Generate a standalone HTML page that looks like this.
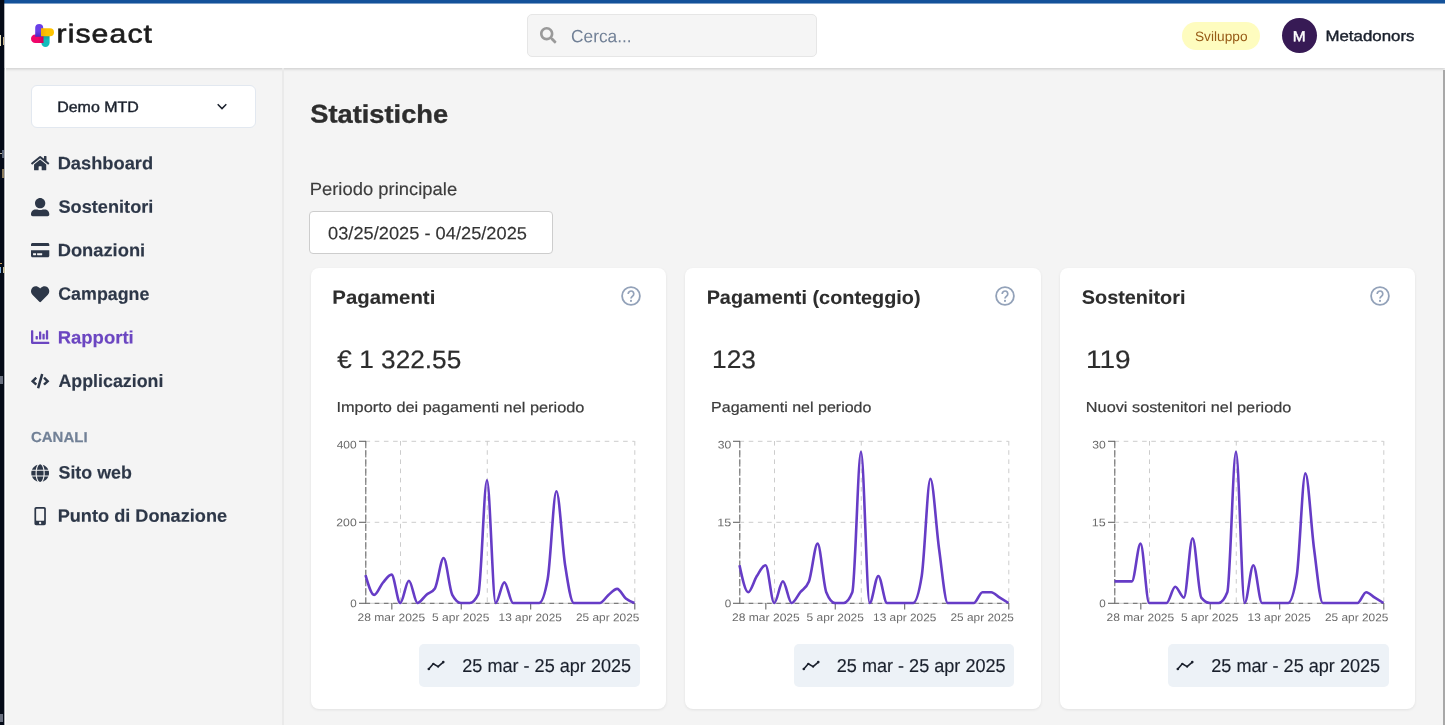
<!DOCTYPE html>
<html lang="it"><head><meta charset="utf-8"><title>Statistiche - riseact</title>
<style>
html,body{margin:0;padding:0;width:1445px;height:725px;overflow:hidden;background:#f4f4f4;font-family:"Liberation Sans", "DejaVu Sans", sans-serif;}
.abs,.ic,.t{position:absolute;}
#txt{position:absolute;left:0;top:0;width:1445px;height:725px;will-change:transform;}
.t{white-space:nowrap;line-height:1;transform-origin:0 0;}
.ic{display:block;overflow:visible;}
</style></head><body>
<div class="abs" style="left:0;top:0;width:1445px;height:725px;background:#f4f4f4"></div>
<div class="abs" style="left:0;top:0;width:1445px;height:68px;background:#fff;box-shadow:0 1px 3px rgba(0,0,0,.18)"></div>
<div class="abs" style="left:282px;top:68px;width:2px;height:657px;background:#eaeaea"></div>
<div class="abs" style="left:0;top:0;width:1445px;height:3px;background:#14529a"></div>
<div class="abs" style="left:0;top:3px;width:1445px;height:1px;background:rgba(20,82,154,.55)"></div>
<div class="abs" style="left:0;top:0;width:4px;height:725px;background:#050b18"></div>
<div class="abs" style="left:4px;top:0;width:1px;height:725px;background:rgba(5,11,24,.3)"></div>
<div class="abs" style="left:5px;top:4px;width:1px;height:721px;background:#fff"></div>
<div class="abs" style="left:0px;top:35.3px;width:1.2px;height:10.3px;background:#e8e2c0"></div>
<div class="abs" style="left:2.6px;top:36.5px;width:1.6px;height:8.5px;background:#c9b48a"></div>
<div class="abs" style="left:0px;top:153px;width:3.2px;height:1.2px;background:#b9b4a0"></div>
<div class="abs" style="left:2px;top:150px;width:1.8px;height:8px;background:#5a6478"></div>
<div class="abs" style="left:2px;top:168.5px;width:1.6px;height:9.5px;background:#8a7a5c"></div>
<div class="abs" style="left:0px;top:262.5px;width:1.5px;height:1.2px;background:#c9a060"></div>
<div class="abs" style="left:0px;top:267px;width:1.4px;height:6px;background:#7fb0e0"></div>
<div class="abs" style="left:3px;top:267px;width:1.6px;height:5.5px;background:#c9c0a0"></div>
<div class="abs" style="left:0px;top:376px;width:2.5px;height:8px;background:#6a7080"></div>
<div class="abs" style="left:0px;top:714px;width:3px;height:8px;background:#6a7080"></div>
<div class="abs" style="left:1443px;top:70px;width:2px;height:655px;background:#a8a8a8"></div>
<svg class="ic" style="left:29px;top:22px;width:27px;height:27px" viewBox="29 22 27 27">
<defs>
<linearGradient id="gp" x1="0" y1="0" x2="0" y2="1"><stop offset=".55" stop-color="#6a40e8"/><stop offset="1" stop-color="#4a2bc2"/></linearGradient>
<linearGradient id="gy" x1="0" y1="0" x2="1" y2="0"><stop offset="0" stop-color="#f5aa00"/><stop offset=".45" stop-color="#fdc300"/></linearGradient>
<linearGradient id="gt" x1="0" y1="0" x2="0" y2="1"><stop offset="0" stop-color="#0d9a9a"/><stop offset=".45" stop-color="#13bcbc"/></linearGradient>
<linearGradient id="gk" x1="0" y1="0" x2="1" y2="0"><stop offset=".55" stop-color="#f0056a"/><stop offset="1" stop-color="#d10055"/></linearGradient>
</defs>
<path d="M41.3 35h8.3v7.85a4.15 4.15 0 0 1-8.3 0z" fill="url(#gt)"/>
<path d="M43.5 34.6v8.5h-8.25a4.25 4.25 0 0 1 0-8.5z" fill="url(#gk)"/>
<path d="M35.2 36.8v-8.7a4 4 0 0 1 8 0v8.700z" fill="url(#gp)"/>
<path d="M41 28.2h9a4 4 0 0 1 0 8h-9z" fill="url(#gy)"/>
</svg>
<div class="abs" style="left:527px;top:14px;width:290px;height:43px;background:#f5f5f5;border:1px solid #e6e6e6;border-radius:5px;box-sizing:border-box"></div>
<svg class="ic" style="left:540.40px;top:27.25px;width:16.5px;height:16.5px" viewBox="0 0 512 512"><path fill="#9a9a9a" d="M505 442.700L405.300 343c-4.500-4.500-10.600-7-17-7H372c27.600-35.300 44-79.700 44-128C416 93.100 322.900 0 208 0S0 93.100 0 208s93.100 208 208 208c48.300 0 92.700-16.400 128-44v16.300c0 6.400 2.500 12.500 7 17l99.700 99.700c9.400 9.400 24.600 9.400 33.900 0l28.300-28.300c9.400-9.400 9.400-24.600.1-34zM208 336c-70.700 0-128-57.200-128-128 0-70.700 57.200-128 128-128 70.700 0 128 57.200 128 128 0 70.700-57.200 128-128 128z"/></svg>
<div class="abs" style="left:1181.9px;top:21.6px;width:77.9px;height:28.3px;background:#fefcbf;border-radius:15px"></div>
<div class="abs" style="left:1282.1px;top:18.4px;width:34.8px;height:34.8px;background:#371a55;border-radius:50%"></div>
<div class="abs" style="left:31.3px;top:85.3px;width:224.6px;height:42.4px;background:#fff;border:1px solid #e2e8f0;border-radius:6px;box-sizing:border-box"></div>
<svg class="ic" style="left:216px;top:100.5px;width:12px;height:12px" viewBox="0 0 12 12"><path d="M1.7 3.3 L6 7.6 L10.3 3.3" fill="none" stroke="#1a202c" stroke-width="1.5"/></svg>
<svg class="ic" style="left:31.10px;top:153.90px;width:18.3px;height:18.3px" viewBox="0 0 576 512"><path fill="#2d3748" d="M280.37 148.26L96 300.11V464a16 16 0 0 0 16 16l112.06-.29a16 16 0 0 0 15.92-16V368a16 16 0 0 1 16-16h64a16 16 0 0 1 16 16v95.64a16 16 0 0 0 16 16.05L464 480a16 16 0 0 0 16-16V300L295.67 148.26a12.19 12.19 0 0 0-15.3 0zM571.6 251.47L488 182.56V44.05a12 12 0 0 0-12-12h-56a12 12 0 0 0-12 12v72.61L318.47 43a48 48 0 0 0-61 0L4.34 251.47a12 12 0 0 0-1.6 16.9l25.5 31A12 12 0 0 0 45.15 301l235.22-193.74a12.19 12.19 0 0 1 15.3 0L530.9 301a12 12 0 0 0 16.9-1.6l25.5-31a12 12 0 0 0-1.7-16.93z"/></svg>
<svg class="ic" style="left:31.10px;top:197.50px;width:18.3px;height:18.3px" viewBox="0 0 512 512"><path fill="#2d3748" d="M256 288c79.5 0 144-64.5 144-144S335.5 0 256 0 112 64.5 112 144s64.5 144 144 144zm128 32h-55.1c-22.2 10.2-46.9 16-72.9 16s-50.6-5.8-72.9-16H128C57.3 320 0 377.3 0 448v16c0 26.5 21.5 48 48 48h416c26.5 0 48-21.5 48-48v-16c0-70.7-57.3-128-128-128z"/></svg>
<svg class="ic" style="left:31.10px;top:241.10px;width:18.3px;height:18.3px" viewBox="0 0 576 512"><path fill="#2d3748" d="M0 432c0 26.5 21.5 48 48 48h480c26.5 0 48-21.5 48-48V256H0v176zm192-68c0-6.6 5.4-12 12-12h136c6.6 0 12 5.4 12 12v40c0 6.6-5.4 12-12 12H204c-6.6 0-12-5.4-12-12v-40zm-128 0c0-6.6 5.4-12 12-12h72c6.6 0 12 5.4 12 12v40c0 6.6-5.4 12-12 12H76c-6.6 0-12-5.4-12-12v-40zM576 80v48H0V80c0-26.5 21.5-48 48-48h480c26.5 0 48 21.5 48 48z"/></svg>
<svg class="ic" style="left:31.10px;top:284.70px;width:18.3px;height:18.3px" viewBox="0 0 512 512"><path fill="#2d3748" d="M462.3 62.6C407.5 15.9 326 24.3 275.7 76.2L256 96.5l-19.7-20.3C186.1 24.3 104.5 15.9 49.700 62.600c-62.800 53.600-66.100 149.800-9.900 207.900l193.500 199.800c12.500 12.900 32.800 12.900 45.300 0l193.500-199.800c56.300-58.100 53-154.300-9.800-207.900z"/></svg>
<svg class="ic" style="left:31.10px;top:328.30px;width:18.3px;height:18.3px" viewBox="0 0 512 512"><path fill="#6b46c1" d="M332.8 320h38.400c6.400 0 12.800-6.400 12.800-12.800V172.800c0-6.400-6.400-12.800-12.800-12.800h-38.400c-6.400 0-12.800 6.400-12.800 12.800v134.400c0 6.400 6.400 12.800 12.800 12.800zm96 0h38.400c6.400 0 12.800-6.400 12.800-12.800V76.800c0-6.400-6.400-12.800-12.800-12.800h-38.400c-6.400 0-12.800 6.400-12.800 12.800v230.400c0 6.400 6.400 12.800 12.800 12.800zm-288 0h38.400c6.400 0 12.800-6.400 12.800-12.800v-70.400c0-6.400-6.400-12.800-12.800-12.800h-38.400c-6.400 0-12.800 6.400-12.800 12.800v70.400c0 6.400 6.400 12.800 12.800 12.800zm96 0h38.400c6.400 0 12.800-6.400 12.800-12.800V108.800c0-6.400-6.400-12.800-12.800-12.800h-38.400c-6.400 0-12.800 6.400-12.800 12.800v198.400c0 6.400 6.400 12.800 12.800 12.800zM496 384H64V80c0-8.840-7.160-16-16-16H16C7.160 64 0 71.160 0 80v336c0 17.670 14.330 32 32 32h464c8.840 0 16-7.160 16-16v-32c0-8.840-7.160-16-16-16z"/></svg>
<svg class="ic" style="left:31.10px;top:371.90px;width:18.3px;height:18.3px" viewBox="0 0 640 512"><path fill="#2d3748" d="M278.9 511.5l-61-17.700c-6.400-1.800-10-8.500-8.200-14.900L346.200 8.700c1.800-6.400 8.500-10 14.900-8.200l61 17.700c6.400 1.800 10 8.500 8.200 14.900L293.800 503.300c-1.900 6.400-8.500 10.100-14.900 8.200zm-114-112.200l43.500-46.400c4.600-4.900 4.300-12.700-.8-17.200L117 256l90.600-79.700c5.100-4.500 5.500-12.300.8-17.200l-43.500-46.400c-4.500-4.800-12.100-5.100-17-.5L3.800 247.200c-5.100 4.700-5.100 12.800 0 17.500l144.100 135.100c4.900 4.600 12.500 4.400 17-.5zm327.200.6l144.100-135.100c5.100-4.700 5.100-12.800 0-17.500L492.100 112.100c-4.800-4.500-12.400-4.300-17 .5L431.600 159c-4.600 4.900-4.300 12.700.8 17.200L523 256l-90.600 79.700c-5.100 4.500-5.500 12.300-.8 17.200l43.500 46.400c4.500 4.900 12.100 5.100 17 .6z"/></svg>
<svg class="ic" style="left:31.10px;top:463.50px;width:18.3px;height:18.3px" viewBox="0 0 496 512"><path fill="#2d3748" d="M336.5 160C322 70.7 287.8 8 248 8s-74 62.700-88.500 152h177zM152 256c0 22.200 1.200 43.500 3.300 64h185.300c2.100-20.500 3.300-41.800 3.300-64s-1.200-43.500-3.300-64H155.300c-2.100 20.500-3.300 41.800-3.300 64zm324.700-96c-28.600-67.900-86.500-120.400-158-141.600 24.400 33.800 41.200 84.700 50 141.600h108zM177.200 18.400C105.800 39.600 47.800 92.100 19.300 160h108c8.700-56.900 25.500-107.800 49.900-141.600zM487.400 192H372.700c2.100 21 3.300 42.500 3.300 64s-1.200 43-3.300 64h114.600c5.500-20.500 8.600-41.800 8.600-64s-3.100-43.500-8.500-64zM120 256c0-21.500 1.200-43 3.300-64H8.600C3.200 212.500 0 233.800 0 256s3.200 43.500 8.600 64h114.600c-2-21-3.200-42.500-3.200-64zm39.500 96c14.500 89.300 48.700 152 88.500 152s74-62.700 88.500-152h-177zm159.300 141.600c71.400-21.200 129.400-73.700 158-141.600h-108c-8.800 56.900-25.600 107.800-50 141.600zM19.300 352c28.600 67.900 86.500 120.400 158 141.600-24.400-33.800-41.200-84.700-50-141.600h-108z"/></svg>
<svg class="ic" style="left:31.10px;top:506.70px;width:18.3px;height:18.3px" viewBox="0 0 320 512"><path fill="#2d3748" d="M272 0H48C21.500 0 0 21.500 0 48v416c0 26.500 21.500 48 48 48h224c26.500 0 48-21.500 48-48V48c0-26.500-21.500-48-48-48zM160 480c-17.700 0-32-14.300-32-32s14.300-32 32-32 32 14.300 32 32-14.300 32-32 32zm112-108c0 6.600-5.400 12-12 12H60c-6.600 0-12-5.400-12-12V60c0-6.600 5.400-12 12-12h200c6.600 0 12 5.400 12 12v312z"/></svg>
<div class="abs" style="left:309px;top:211px;width:244px;height:43px;background:#fff;border:1px solid #cdcdcd;border-radius:4px;box-sizing:border-box"></div>
<div class="abs" style="left:310.5px;top:268px;width:355.5px;height:440.5px;background:#fff;border-radius:8px;box-shadow:0 1px 3px rgba(0,0,0,.08)"></div>
<svg class="ic" style="left:620.90px;top:285.7px;width:20px;height:20px" viewBox="0 0 20 20"><circle cx="10" cy="10" r="8.9" fill="none" stroke="#93a2b9" stroke-width="1.8"/><path d="M7.2 7.9a2.8 2.8 0 1 1 4.3 2.3c-.9.6-1.5 1.1-1.5 2.3" fill="none" stroke="#93a2b9" stroke-width="1.7"/><circle cx="10" cy="14.9" r="1.05" fill="#93a2b9"/></svg>
<svg class="ic" style="left:310.50px;top:420px;width:355.5px;height:215px" viewBox="310.50 420 355.5 215"><line x1="365.0" y1="441.3" x2="634.0" y2="441.3" stroke="#ccc" stroke-width="1" stroke-dasharray="4.6 4.6" fill="none"/><line x1="365.0" y1="522.3" x2="634.0" y2="522.3" stroke="#ccc" stroke-width="1" stroke-dasharray="4.6 4.6" fill="none"/><line x1="365.0" y1="603.3" x2="634.0" y2="603.3" stroke="#ccc" stroke-width="1"/><line x1="365.30" y1="441" x2="365.30" y2="603" stroke="#ccc" stroke-width="1" stroke-dasharray="4.6 4.6" fill="none"/><line x1="400.01" y1="441" x2="400.01" y2="603" stroke="#ccc" stroke-width="1" stroke-dasharray="4.6 4.6" fill="none"/><line x1="486.78" y1="441" x2="486.78" y2="603" stroke="#ccc" stroke-width="1" stroke-dasharray="4.6 4.6" fill="none"/><line x1="634.30" y1="441" x2="634.30" y2="603" stroke="#ccc" stroke-width="1" stroke-dasharray="4.6 4.6" fill="none"/><line x1="365.3" y1="441" x2="365.3" y2="603" stroke="#666" stroke-width="1" stroke-dasharray="7.2 2"/><line x1="365.0" y1="603.3" x2="634.0" y2="603.3" stroke="#666" stroke-width="1" stroke-dasharray="4.6 4.6"/><line x1="358.5" y1="441.3" x2="365.5" y2="441.3" stroke="#666" stroke-width="1.1" fill="none"/><line x1="358.5" y1="522.3" x2="365.5" y2="522.3" stroke="#666" stroke-width="1.1" fill="none"/><line x1="358.5" y1="603.3" x2="365.5" y2="603.3" stroke="#666" stroke-width="1.1" fill="none"/><line x1="391.33" y1="603" x2="391.33" y2="609.5" stroke="#666" stroke-width="1.1" fill="none"/><line x1="460.75" y1="603" x2="460.75" y2="609.5" stroke="#666" stroke-width="1.1" fill="none"/><line x1="530.17" y1="603" x2="530.17" y2="609.5" stroke="#666" stroke-width="1.1" fill="none"/><line x1="634.30" y1="603" x2="634.30" y2="609.5" stroke="#666" stroke-width="1.1" fill="none"/><path d="M365.00,575.05C367.89,584.98,370.78,594.90,373.68,594.90C376.57,594.90,379.46,586.12,382.35,582.75C385.25,579.38,388.14,574.65,391.03,574.65C393.92,574.65,396.82,603.00,399.71,603.00C402.60,603.00,405.49,580.73,408.39,580.73C411.28,580.73,414.17,603.00,417.06,603.00C419.96,603.00,422.85,597.33,425.74,594.90C428.63,592.47,431.53,592.74,434.42,588.42C437.31,584.10,440.20,558.04,443.10,558.04C445.99,558.04,448.88,589.50,451.77,594.90C454.67,600.30,457.56,603.00,460.45,603.00C463.34,603.00,466.24,603.00,469.13,603.00C472.02,603.00,474.91,600.03,477.81,594.09C480.70,588.15,483.59,480.29,486.48,480.29C489.38,480.29,492.27,603.00,495.16,603.00C498.05,603.00,500.95,582.35,503.84,582.35C506.73,582.35,509.62,603.00,512.52,603.00C515.41,603.00,518.30,603.00,521.19,603.00C524.09,603.00,526.98,603.00,529.87,603.00C532.76,603.00,535.66,603.00,538.55,603.00C541.44,603.00,544.33,594.90,547.23,578.70C550.12,562.50,553.01,491.22,555.90,491.22C558.80,491.22,561.69,546.30,564.58,564.93C567.47,583.56,570.37,603.00,573.26,603.00C576.15,603.00,579.04,603.00,581.94,603.00C584.83,603.00,587.72,603.00,590.61,603.00C593.51,603.00,596.40,603.00,599.29,603.00C602.18,603.00,605.08,597.26,607.97,594.90C610.86,592.54,613.75,588.83,616.65,588.83C619.54,588.83,622.43,596.18,625.32,598.54C628.22,600.91,631.11,601.95,634.00,603.00" fill="none" stroke="#663cc6" stroke-width="2.6" stroke-linejoin="round"/></svg>
<div class="abs" style="left:419.10px;top:644.1px;width:220.8px;height:42.5px;background:#edf2f7;border-radius:5px"></div>
<svg class="ic" style="left:426.00px;top:657px;width:20px;height:16px" viewBox="426.00 657 20 16"><path d="M428.80 669 L433.30 663.8 L438.10 666.6 L443.30 662.1" fill="none" stroke="#1a202c" stroke-width="1.6" stroke-linejoin="round"/><circle cx="428.80" cy="669" r="1.3" fill="#1a202c"/><circle cx="443.30" cy="662.1" r="1.3" fill="#1a202c"/><circle cx="433.30" cy="663.8" r="1.1" fill="#1a202c"/><circle cx="438.10" cy="666.6" r="1.1" fill="#1a202c"/></svg>
<div class="abs" style="left:685px;top:268px;width:355.5px;height:440.5px;background:#fff;border-radius:8px;box-shadow:0 1px 3px rgba(0,0,0,.08)"></div>
<svg class="ic" style="left:995.40px;top:285.7px;width:20px;height:20px" viewBox="0 0 20 20"><circle cx="10" cy="10" r="8.9" fill="none" stroke="#93a2b9" stroke-width="1.8"/><path d="M7.2 7.9a2.8 2.8 0 1 1 4.3 2.3c-.9.6-1.5 1.1-1.5 2.3" fill="none" stroke="#93a2b9" stroke-width="1.7"/><circle cx="10" cy="14.9" r="1.05" fill="#93a2b9"/></svg>
<svg class="ic" style="left:685.00px;top:420px;width:355.5px;height:215px" viewBox="685.00 420 355.5 215"><line x1="739.5" y1="441.3" x2="1008.5" y2="441.3" stroke="#ccc" stroke-width="1" stroke-dasharray="4.6 4.6" fill="none"/><line x1="739.5" y1="522.3" x2="1008.5" y2="522.3" stroke="#ccc" stroke-width="1" stroke-dasharray="4.6 4.6" fill="none"/><line x1="739.5" y1="603.3" x2="1008.5" y2="603.3" stroke="#ccc" stroke-width="1"/><line x1="739.80" y1="441" x2="739.80" y2="603" stroke="#ccc" stroke-width="1" stroke-dasharray="4.6 4.6" fill="none"/><line x1="774.51" y1="441" x2="774.51" y2="603" stroke="#ccc" stroke-width="1" stroke-dasharray="4.6 4.6" fill="none"/><line x1="861.28" y1="441" x2="861.28" y2="603" stroke="#ccc" stroke-width="1" stroke-dasharray="4.6 4.6" fill="none"/><line x1="1008.80" y1="441" x2="1008.80" y2="603" stroke="#ccc" stroke-width="1" stroke-dasharray="4.6 4.6" fill="none"/><line x1="739.8" y1="441" x2="739.8" y2="603" stroke="#666" stroke-width="1" stroke-dasharray="7.2 2"/><line x1="739.5" y1="603.3" x2="1008.5" y2="603.3" stroke="#666" stroke-width="1" stroke-dasharray="4.6 4.6"/><line x1="733.0" y1="441.3" x2="740.0" y2="441.3" stroke="#666" stroke-width="1.1" fill="none"/><line x1="733.0" y1="522.3" x2="740.0" y2="522.3" stroke="#666" stroke-width="1.1" fill="none"/><line x1="733.0" y1="603.3" x2="740.0" y2="603.3" stroke="#666" stroke-width="1.1" fill="none"/><line x1="765.83" y1="603" x2="765.83" y2="609.5" stroke="#666" stroke-width="1.1" fill="none"/><line x1="835.25" y1="603" x2="835.25" y2="609.5" stroke="#666" stroke-width="1.1" fill="none"/><line x1="904.67" y1="603" x2="904.67" y2="609.5" stroke="#666" stroke-width="1.1" fill="none"/><line x1="1008.80" y1="603" x2="1008.80" y2="609.5" stroke="#666" stroke-width="1.1" fill="none"/><path d="M739.50,565.20C742.39,578.70,745.28,592.20,748.18,592.20C751.07,592.20,753.96,580.50,756.85,576.00C759.75,571.50,762.64,565.20,765.53,565.20C768.42,565.20,771.32,603.00,774.21,603.00C777.10,603.00,779.99,581.40,782.89,581.40C785.78,581.40,788.67,603.00,791.56,603.00C794.46,603.00,797.35,595.80,800.24,592.20C803.13,588.60,806.03,588.60,808.92,581.40C811.81,574.20,814.70,543.60,817.60,543.60C820.49,543.60,823.38,585.00,826.27,592.20C829.17,599.40,832.06,603.00,834.95,603.00C837.84,603.00,840.74,603.00,843.63,603.00C846.52,603.00,849.41,599.40,852.31,592.20C855.20,585.00,858.09,451.80,860.98,451.80C863.88,451.80,866.77,603.00,869.66,603.00C872.55,603.00,875.45,576.00,878.34,576.00C881.23,576.00,884.12,603.00,887.02,603.00C889.91,603.00,892.80,603.00,895.69,603.00C898.59,603.00,901.48,603.00,904.37,603.00C907.26,603.00,910.16,603.00,913.05,603.00C915.94,603.00,918.83,594.00,921.73,576.00C924.62,558.00,927.51,478.80,930.40,478.80C933.30,478.80,936.19,528.30,939.08,549.00C941.97,569.70,944.87,603.00,947.76,603.00C950.65,603.00,953.54,603.00,956.44,603.00C959.33,603.00,962.22,603.00,965.11,603.00C968.01,603.00,970.90,603.00,973.79,603.00C976.68,603.00,979.58,592.20,982.47,592.20C985.36,592.20,988.25,592.20,991.15,592.20C994.04,592.20,996.93,595.80,999.82,597.60C1002.72,599.40,1005.61,601.20,1008.50,603.00" fill="none" stroke="#663cc6" stroke-width="2.6" stroke-linejoin="round"/></svg>
<div class="abs" style="left:793.60px;top:644.1px;width:220.8px;height:42.5px;background:#edf2f7;border-radius:5px"></div>
<svg class="ic" style="left:800.50px;top:657px;width:20px;height:16px" viewBox="800.50 657 20 16"><path d="M803.30 669 L807.80 663.8 L812.60 666.6 L817.80 662.1" fill="none" stroke="#1a202c" stroke-width="1.6" stroke-linejoin="round"/><circle cx="803.30" cy="669" r="1.3" fill="#1a202c"/><circle cx="817.80" cy="662.1" r="1.3" fill="#1a202c"/><circle cx="807.80" cy="663.8" r="1.1" fill="#1a202c"/><circle cx="812.60" cy="666.6" r="1.1" fill="#1a202c"/></svg>
<div class="abs" style="left:1059.5px;top:268px;width:355.5px;height:440.5px;background:#fff;border-radius:8px;box-shadow:0 1px 3px rgba(0,0,0,.08)"></div>
<svg class="ic" style="left:1369.90px;top:285.7px;width:20px;height:20px" viewBox="0 0 20 20"><circle cx="10" cy="10" r="8.9" fill="none" stroke="#93a2b9" stroke-width="1.8"/><path d="M7.2 7.9a2.8 2.8 0 1 1 4.3 2.3c-.9.6-1.5 1.1-1.5 2.3" fill="none" stroke="#93a2b9" stroke-width="1.7"/><circle cx="10" cy="14.9" r="1.05" fill="#93a2b9"/></svg>
<svg class="ic" style="left:1059.50px;top:420px;width:355.5px;height:215px" viewBox="1059.50 420 355.5 215"><line x1="1114.0" y1="441.3" x2="1383.0" y2="441.3" stroke="#ccc" stroke-width="1" stroke-dasharray="4.6 4.6" fill="none"/><line x1="1114.0" y1="522.3" x2="1383.0" y2="522.3" stroke="#ccc" stroke-width="1" stroke-dasharray="4.6 4.6" fill="none"/><line x1="1114.0" y1="603.3" x2="1383.0" y2="603.3" stroke="#ccc" stroke-width="1"/><line x1="1114.30" y1="441" x2="1114.30" y2="603" stroke="#ccc" stroke-width="1" stroke-dasharray="4.6 4.6" fill="none"/><line x1="1149.01" y1="441" x2="1149.01" y2="603" stroke="#ccc" stroke-width="1" stroke-dasharray="4.6 4.6" fill="none"/><line x1="1235.78" y1="441" x2="1235.78" y2="603" stroke="#ccc" stroke-width="1" stroke-dasharray="4.6 4.6" fill="none"/><line x1="1383.30" y1="441" x2="1383.30" y2="603" stroke="#ccc" stroke-width="1" stroke-dasharray="4.6 4.6" fill="none"/><line x1="1114.3" y1="441" x2="1114.3" y2="603" stroke="#666" stroke-width="1" stroke-dasharray="7.2 2"/><line x1="1114.0" y1="603.3" x2="1383.0" y2="603.3" stroke="#666" stroke-width="1" stroke-dasharray="4.6 4.6"/><line x1="1107.5" y1="441.3" x2="1114.5" y2="441.3" stroke="#666" stroke-width="1.1" fill="none"/><line x1="1107.5" y1="522.3" x2="1114.5" y2="522.3" stroke="#666" stroke-width="1.1" fill="none"/><line x1="1107.5" y1="603.3" x2="1114.5" y2="603.3" stroke="#666" stroke-width="1.1" fill="none"/><line x1="1140.33" y1="603" x2="1140.33" y2="609.5" stroke="#666" stroke-width="1.1" fill="none"/><line x1="1209.75" y1="603" x2="1209.75" y2="609.5" stroke="#666" stroke-width="1.1" fill="none"/><line x1="1279.17" y1="603" x2="1279.17" y2="609.5" stroke="#666" stroke-width="1.1" fill="none"/><line x1="1383.30" y1="603" x2="1383.30" y2="609.5" stroke="#666" stroke-width="1.1" fill="none"/><path d="M1114.00,581.40C1116.89,581.40,1119.78,581.40,1122.68,581.40C1125.57,581.40,1128.46,581.40,1131.35,581.40C1134.25,581.40,1137.14,543.60,1140.03,543.60C1142.92,543.60,1145.82,603.00,1148.71,603.00C1151.60,603.00,1154.49,603.00,1157.39,603.00C1160.28,603.00,1163.17,603.00,1166.06,603.00C1168.96,603.00,1171.85,586.80,1174.74,586.80C1177.63,586.80,1180.53,597.60,1183.42,597.60C1186.31,597.60,1189.20,538.20,1192.10,538.20C1194.99,538.20,1197.88,594.00,1200.77,597.60C1203.67,601.20,1206.56,603.00,1209.45,603.00C1212.34,603.00,1215.24,603.00,1218.13,603.00C1221.02,603.00,1223.91,599.40,1226.81,592.20C1229.70,585.00,1232.59,451.80,1235.48,451.80C1238.38,451.80,1241.27,603.00,1244.16,603.00C1247.05,603.00,1249.95,565.20,1252.84,565.20C1255.73,565.20,1258.62,603.00,1261.52,603.00C1264.41,603.00,1267.30,603.00,1270.19,603.00C1273.09,603.00,1275.98,603.00,1278.87,603.00C1281.76,603.00,1284.66,603.00,1287.55,603.00C1290.44,603.00,1293.33,594.00,1296.23,576.00C1299.12,558.00,1302.01,473.40,1304.90,473.40C1307.80,473.40,1310.69,527.40,1313.58,549.00C1316.47,570.60,1319.37,603.00,1322.26,603.00C1325.15,603.00,1328.04,603.00,1330.94,603.00C1333.83,603.00,1336.72,603.00,1339.61,603.00C1342.51,603.00,1345.40,603.00,1348.29,603.00C1351.18,603.00,1354.08,603.00,1356.97,603.00C1359.86,603.00,1362.75,592.20,1365.65,592.20C1368.54,592.20,1371.43,595.80,1374.32,597.60C1377.22,599.40,1380.11,601.20,1383.00,603.00" fill="none" stroke="#663cc6" stroke-width="2.6" stroke-linejoin="round"/></svg>
<div class="abs" style="left:1168.10px;top:644.1px;width:220.8px;height:42.5px;background:#edf2f7;border-radius:5px"></div>
<svg class="ic" style="left:1175.00px;top:657px;width:20px;height:16px" viewBox="1175.00 657 20 16"><path d="M1177.80 669 L1182.30 663.8 L1187.10 666.6 L1192.30 662.1" fill="none" stroke="#1a202c" stroke-width="1.6" stroke-linejoin="round"/><circle cx="1177.80" cy="669" r="1.3" fill="#1a202c"/><circle cx="1192.30" cy="662.1" r="1.3" fill="#1a202c"/><circle cx="1182.30" cy="663.8" r="1.1" fill="#1a202c"/><circle cx="1187.10" cy="666.6" r="1.1" fill="#1a202c"/></svg>

<div id="txt">
<span class="t" style="left:56px;top:20px;font-size:26px;color:#1c1c1c;letter-spacing:0.938px;transform:matrix(1.1616,.001,.001,1,0.46,0.50);-webkit-text-stroke:0.6px #1c1c1c;">riseact</span>
<span class="t" style="left:571px;top:28px;font-size:17.9px;color:#718096;transform:matrix(0.9666,.001,.001,1,0.09,0.20);">Cerca...</span>
<span class="t" style="left:1194px;top:30px;font-size:13.6px;color:#975a16;transform:matrix(1.0080,.001,.001,1,0.97,0.00);">Sviluppo</span>
<span class="t" style="left:1292px;top:29px;font-size:14.5px;color:#fff;transform:matrix(1.0654,.001,.001,1,0.63,0.20);-webkit-text-stroke:0.45px #fff;">M</span>
<span class="t" style="left:1325px;top:28px;font-size:15px;color:#1a202c;transform:matrix(1.1248,.001,.001,1,0.41,0.00);-webkit-text-stroke:0.4px #1a202c;">Metadonors</span>
<span class="t" style="left:57px;top:98px;font-size:15.1px;color:#1a202c;transform:matrix(1.0583,.001,.001,1,0.16,0.90);-webkit-text-stroke:0.4px #1a202c;">Demo MTD</span>
<span class="t" style="left:57px;top:155px;font-size:17.9px;color:#2d3748;font-weight:700;transform:matrix(1.0221,.001,.001,1,0.63,0.20);-webkit-text-stroke:0.15px #2d3748;">Dashboard</span>
<span class="t" style="left:58px;top:198px;font-size:17.9px;color:#2d3748;font-weight:700;transform:matrix(1.0152,.001,.001,1,0.49,0.75);-webkit-text-stroke:0.15px #2d3748;">Sostenitori</span>
<span class="t" style="left:57px;top:242px;font-size:17.9px;color:#2d3748;font-weight:700;transform:matrix(1.0241,.001,.001,1,0.63,0.30);-webkit-text-stroke:0.15px #2d3748;">Donazioni</span>
<span class="t" style="left:58px;top:285px;font-size:17.9px;color:#2d3748;font-weight:700;transform:matrix(0.9972,.001,.001,1,0.22,0.85);-webkit-text-stroke:0.15px #2d3748;">Campagne</span>
<span class="t" style="left:57px;top:329px;font-size:17.9px;color:#6b46c1;font-weight:700;transform:matrix(1.0341,.001,.001,1,0.62,0.40);-webkit-text-stroke:0.15px #6b46c1;">Rapporti</span>
<span class="t" style="left:58px;top:372px;font-size:17.9px;color:#2d3748;font-weight:700;transform:matrix(0.9949,.001,.001,1,0.50,0.95);-webkit-text-stroke:0.15px #2d3748;">Applicazioni</span>
<span class="t" style="left:30px;top:430px;font-size:14.7px;color:#718096;font-weight:700;transform:matrix(1.0202,.001,.001,1,0.93,0.10);-webkit-text-stroke:0.2px #718096;">CANALI</span>
<span class="t" style="left:58px;top:464px;font-size:17.9px;color:#2d3748;font-weight:700;transform:matrix(0.9962,.001,.001,1,0.50,0.50);-webkit-text-stroke:0.15px #2d3748;">Sito web</span>
<span class="t" style="left:57px;top:507px;font-size:17.9px;color:#2d3748;font-weight:700;transform:matrix(1.0149,.001,.001,1,0.64,0.70);-webkit-text-stroke:0.15px #2d3748;">Punto di Donazione</span>
<span class="t" style="left:310px;top:101px;font-size:25.4px;color:#2d2d2d;font-weight:700;transform:matrix(1.0738,.001,.001,1,0.26,0.60);-webkit-text-stroke:0.35px #2d2d2d;">Statistiche</span>
<span class="t" style="left:309px;top:181px;font-size:17.8px;color:#3c3c3c;transform:matrix(1.0361,.001,.001,1,0.64,0.00);-webkit-text-stroke:0.15px #3c3c3c;">Periodo principale</span>
<span class="t" style="left:328px;top:225px;font-size:17.8px;color:#333;transform:matrix(1.0266,.001,.001,1,0.01,0.20);-webkit-text-stroke:0.15px #333;">03/25/2025 - 04/25/2025</span>
<span class="t" style="left:332px;top:287px;font-size:19.2px;color:#2d2d2d;font-weight:700;transform:matrix(1.0615,.001,.001,1,0.28,0.80);-webkit-text-stroke:0.1px #2d2d2d;">Pagamenti</span>
<span class="t" style="left:337px;top:347px;font-size:25.5px;color:#2d2d2d;transform:matrix(1.0285,.001,.001,1,0.30,0.10);-webkit-text-stroke:0.2px #2d2d2d;">€ 1 322.55</span>
<span class="t" style="left:336px;top:400px;font-size:14.5px;color:#3c3c3c;transform:matrix(1.1270,.001,.001,1,0.44,0.00);-webkit-text-stroke:0.2px #3c3c3c;">Importo dei pagamenti nel periodo</span>
<span class="t" style="left:336px;top:439px;font-size:11px;color:#6b6b6b;transform:matrix(1.0913,.001,.001,1,0.63,0.50);">400</span>
<span class="t" style="left:336px;top:517px;font-size:11px;color:#6b6b6b;transform:matrix(1.1101,.001,.001,1,0.29,0.30);">200</span>
<span class="t" style="left:350px;top:598px;font-size:11px;color:#6b6b6b;transform:matrix(1.0566,.001,.001,1,0.18,0.30);">0</span>
<span class="t" style="left:357px;top:612px;font-size:11px;color:#6b6b6b;transform:matrix(1.0971,.001,.001,1,0.50,0.10);">28 mar 2025</span>
<span class="t" style="left:432px;top:612px;font-size:11px;color:#6b6b6b;transform:matrix(1.0911,.001,.001,1,0.06,0.10);">5 apr 2025</span>
<span class="t" style="left:498px;top:612px;font-size:11px;color:#6b6b6b;transform:matrix(1.0783,.001,.001,1,0.54,0.10);">13 apr 2025</span>
<span class="t" style="left:575px;top:612px;font-size:11px;color:#6b6b6b;transform:matrix(1.0805,.001,.001,1,0.91,0.10);">25 apr 2025</span>
<span class="t" style="left:462px;top:656px;font-size:18.7px;color:#1a202c;transform:matrix(0.9679,.001,.001,1,0.22,0.90);-webkit-text-stroke:0.15px #1a202c;">25 mar - 25 apr 2025</span>
<span class="t" style="left:706px;top:287px;font-size:19.2px;color:#2d2d2d;font-weight:700;transform:matrix(1.0344,.001,.001,1,0.61,0.80);-webkit-text-stroke:0.1px #2d2d2d;">Pagamenti (conteggio)</span>
<span class="t" style="left:712px;top:347px;font-size:25.5px;color:#2d2d2d;transform:matrix(1.0319,.001,.001,1,0.06,0.10);-webkit-text-stroke:0.2px #2d2d2d;">123</span>
<span class="t" style="left:711px;top:400px;font-size:14.5px;color:#3c3c3c;transform:matrix(1.1053,.001,.001,1,0.06,0.00);-webkit-text-stroke:0.2px #3c3c3c;">Pagamenti nel periodo</span>
<span class="t" style="left:717px;top:439px;font-size:11px;color:#6b6b6b;transform:matrix(1.1036,.001,.001,1,0.66,0.50);">30</span>
<span class="t" style="left:717px;top:517px;font-size:11px;color:#6b6b6b;transform:matrix(1.1436,.001,.001,1,0.19,0.30);">15</span>
<span class="t" style="left:724px;top:598px;font-size:11px;color:#6b6b6b;transform:matrix(1.0566,.001,.001,1,0.68,0.30);">0</span>
<span class="t" style="left:731px;top:612px;font-size:11px;color:#6b6b6b;transform:matrix(1.0971,.001,.001,1,1.00,0.10);">28 mar 2025</span>
<span class="t" style="left:806px;top:612px;font-size:11px;color:#6b6b6b;transform:matrix(1.0911,.001,.001,1,0.56,0.10);">5 apr 2025</span>
<span class="t" style="left:873px;top:612px;font-size:11px;color:#6b6b6b;transform:matrix(1.0783,.001,.001,1,0.04,0.10);">13 apr 2025</span>
<span class="t" style="left:950px;top:612px;font-size:11px;color:#6b6b6b;transform:matrix(1.0805,.001,.001,1,0.41,0.10);">25 apr 2025</span>
<span class="t" style="left:836px;top:656px;font-size:18.7px;color:#1a202c;transform:matrix(0.9679,.001,.001,1,0.72,0.90);-webkit-text-stroke:0.15px #1a202c;">25 mar - 25 apr 2025</span>
<span class="t" style="left:1081px;top:287px;font-size:19.2px;color:#2d2d2d;font-weight:700;transform:matrix(1.0350,.001,.001,1,0.74,0.80);-webkit-text-stroke:0.1px #2d2d2d;">Sostenitori</span>
<span class="t" style="left:1085px;top:347px;font-size:25.5px;color:#2d2d2d;transform:matrix(1.0987,.001,.001,1,0.96,0.10);-webkit-text-stroke:0.2px #2d2d2d;">119</span>
<span class="t" style="left:1085px;top:400px;font-size:14.5px;color:#3c3c3c;transform:matrix(1.1232,.001,.001,1,0.84,0.00);-webkit-text-stroke:0.2px #3c3c3c;">Nuovi sostenitori nel periodo</span>
<span class="t" style="left:1092px;top:439px;font-size:11px;color:#6b6b6b;transform:matrix(1.1036,.001,.001,1,0.16,0.50);">30</span>
<span class="t" style="left:1091px;top:517px;font-size:11px;color:#6b6b6b;transform:matrix(1.1436,.001,.001,1,0.69,0.30);">15</span>
<span class="t" style="left:1099px;top:598px;font-size:11px;color:#6b6b6b;transform:matrix(1.0566,.001,.001,1,0.18,0.30);">0</span>
<span class="t" style="left:1106px;top:612px;font-size:11px;color:#6b6b6b;transform:matrix(1.0971,.001,.001,1,0.50,0.10);">28 mar 2025</span>
<span class="t" style="left:1181px;top:612px;font-size:11px;color:#6b6b6b;transform:matrix(1.0911,.001,.001,1,0.06,0.10);">5 apr 2025</span>
<span class="t" style="left:1247px;top:612px;font-size:11px;color:#6b6b6b;transform:matrix(1.0783,.001,.001,1,0.54,0.10);">13 apr 2025</span>
<span class="t" style="left:1324px;top:612px;font-size:11px;color:#6b6b6b;transform:matrix(1.0805,.001,.001,1,0.91,0.10);">25 apr 2025</span>
<span class="t" style="left:1211px;top:656px;font-size:18.7px;color:#1a202c;transform:matrix(0.9679,.001,.001,1,0.22,0.90);-webkit-text-stroke:0.15px #1a202c;">25 mar - 25 apr 2025</span>
</div>
</body></html>
